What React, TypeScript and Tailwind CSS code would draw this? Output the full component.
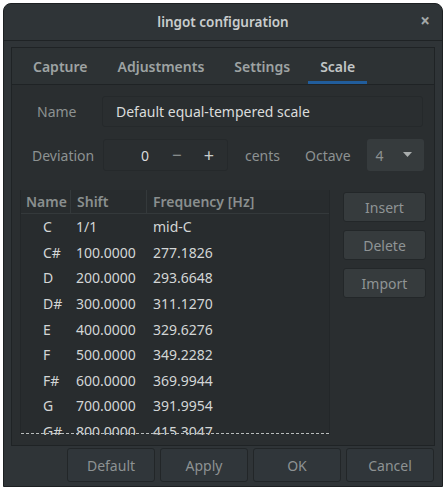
import React from 'react';

const notes = [
  { name: 'C', shift: '1/1', freq: 'mid-C' },
  { name: 'C#', shift: '100.0000', freq: '277.1826' },
  { name: 'D', shift: '200.0000', freq: '293.6648' },
  { name: 'D#', shift: '300.0000', freq: '311.1270' },
  { name: 'E', shift: '400.0000', freq: '329.6276' },
  { name: 'F', shift: '500.0000', freq: '349.2282' },
  { name: 'F#', shift: '600.0000', freq: '369.9944' },
  { name: 'G', shift: '700.0000', freq: '391.9954' },
  { name: 'G#', shift: '800.0000', freq: '415.3047' },
];

const tabs = ['Capture', 'Adjustments', 'Settings', 'Scale'];

function SideButton({ label }: { label: string }) {
  return (
    <button className="h-[30px] w-[83px] rounded-[3px] border border-[#232729] bg-[#363b3d] text-[14px] text-[#8f9495]">
      {label}
    </button>
  );
}

function DialogButton({ label }: { label: string }) {
  return (
    <button className="h-[34px] w-[88px] rounded-[3px] border border-[#222628] bg-[#30363a] text-[14px] text-[#8d9293]">
      {label}
    </button>
  );
}

export default function App() {
  return (
    <div
      className="w-[446px] h-[492px] bg-white pt-[3px] px-[3px]"
      style={{ fontFamily: '"Noto Sans", "Open Sans", sans-serif' }}
    >
      <div className="flex h-[484px] flex-col rounded-t-[8px] border border-[#1d2022] bg-[#2f3437]">
        {/* Header bar */}
        <div className="relative flex h-[37px] shrink-0 items-center justify-center border-b border-[#1f2325]">
          <span className="text-[13.5px] font-semibold text-[#c9cdcd]">lingot configuration</span>
          <span className="absolute right-[12px] top-[8px] text-[17px] font-bold leading-none text-[#a3a8a8]">×</span>
        </div>

        <div className="flex flex-1 flex-col px-[7px] pt-[6px]">
          {/* Notebook */}
          <div className="flex h-[399px] flex-col border border-[#1f2325] bg-[#2a2e30]">
            <div className="flex h-[37px] shrink-0 items-end gap-[6px] border-b border-[#1f2325] bg-[#2d3234] pl-[9px]">
              {tabs.map((t) => (
                <div key={t} className="relative flex h-full items-center px-[12px]">
                  <span
                    className={
                      'text-[14px] font-semibold ' +
                      (t === 'Scale' ? 'text-[#c2c6c6]' : 'text-[#9ea3a3]')
                    }
                  >
                    {t}
                  </span>
                  {t === 'Scale' && (
                    <div className="absolute bottom-0 left-0 right-0 h-[3px] bg-[#215d9c]" />
                  )}
                </div>
              ))}
            </div>

            <div className="flex flex-1 flex-col px-[8px] pt-[11px]">
              {/* Name row */}
              <div className="flex h-[31px] items-center">
                <span className="ml-[17px] w-[65px] text-[14px] text-[#8d9292]">Name</span>
                <div className="mr-[3px] flex h-[31px] flex-1 items-center rounded-[3px] border border-[#25292b] bg-[#2a2e30] pl-[13px]">
                  <span className="text-[14px] text-[#dadcdc]">Default equal-tempered scale</span>
                </div>
              </div>

              {/* Deviation / octave row */}
              <div className="mt-[12px] flex h-[32px] items-center">
                <span className="ml-[12px] w-[71px] text-[14px] text-[#8d9292]">Deviation</span>
                <div className="flex h-[32px] w-[125px] items-center rounded-[3px] border border-[#25292b] bg-[#2a2e30]">
                  <span className="ml-[37px] text-[14px] text-[#dadcdc]">0</span>
                  <span className="ml-[23px] text-[17px] text-[#9ca1a1]">−</span>
                  <span className="ml-[22px] text-[18px] text-[#c8cccc]">+</span>
                </div>
                <span className="ml-[17px] text-[14px] text-[#8d9292]">cents</span>
                <span className="ml-[25px] text-[14px] text-[#8d9292]">Octave</span>
                <div className="ml-[16px] flex h-[32px] w-[57px] items-center rounded-[3px] bg-[#363b3d]">
                  <span className="ml-[9px] text-[14px] text-[#8d9292]">4</span>
                  <svg className="ml-[19px]" width="9" height="6" viewBox="0 0 9 6">
                    <path d="M0 0 L9 0 L4.5 5 Z" fill="#a9adad" />
                  </svg>
                </div>
              </div>

              {/* Scale table + side buttons */}
              <div className="mt-[19px] flex">
                <div className="relative h-[245px] w-[311px] overflow-hidden border-x border-[#232729] bg-[#282c2e]">
                  <div className="flex h-[24px] items-center border-b border-[#34393b] text-[14px] font-semibold text-[#8a8f8f]">
                    <div className="flex h-full w-[50px] items-center border-r border-[#34393b] pl-[5px]">Name</div>
                    <div className="flex h-full w-[76px] items-center border-r border-[#34393b] pl-[6px]">Shift</div>
                    <div className="pl-[6px]">Frequency [Hz]</div>
                  </div>
                  {notes.map((n) => (
                    <div key={n.name} className="flex h-[25.6px] items-center text-[14px] text-[#d3d6d6]">
                      <div className="w-[50px] pl-[22px]">{n.name}</div>
                      <div className="w-[77px] pl-[5px]">{n.shift}</div>
                      <div className="pl-[5px]">{n.freq}</div>
                    </div>
                  ))}
                  <div className="absolute bottom-[1px] left-0 right-0 border-b border-dashed border-[#b8bcbc]" />
                </div>
                <div className="ml-[13px] mt-[2px] flex flex-col gap-[8px]">
                  <SideButton label="Insert" />
                  <SideButton label="Delete" />
                  <SideButton label="Import" />
                </div>
              </div>
            </div>
          </div>

          {/* Dialog actions */}
          <div className="mt-[2px] flex justify-end gap-[5px] pr-[1px]">
            <DialogButton label="Default" />
            <DialogButton label="Apply" />
            <DialogButton label="OK" />
            <DialogButton label="Cancel" />
          </div>
        </div>
      </div>
    </div>
  );
}
